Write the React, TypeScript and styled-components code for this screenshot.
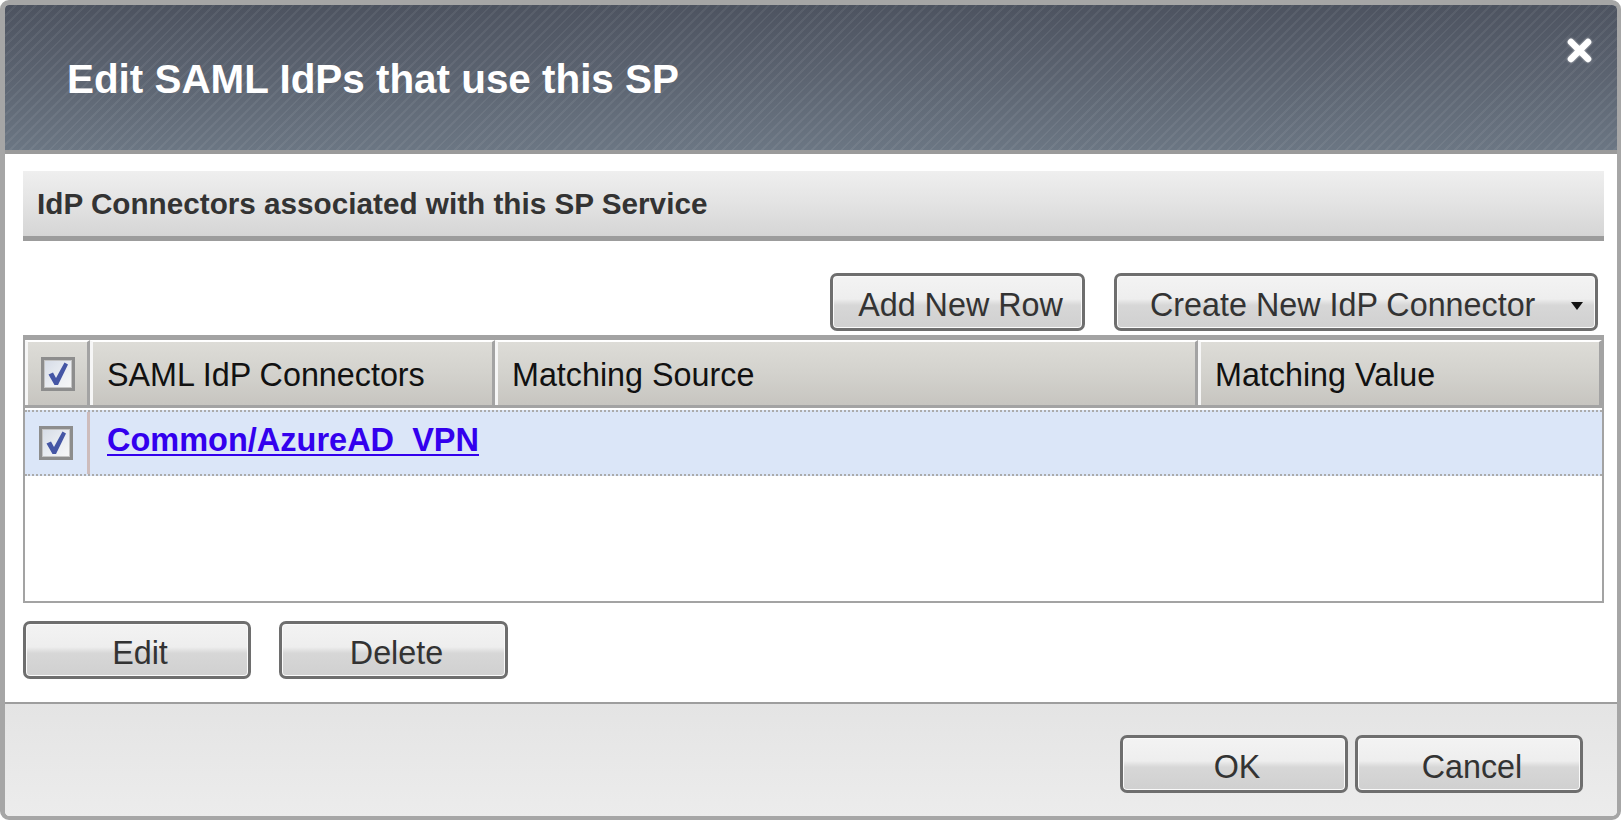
import styled, { createGlobalStyle } from "styled-components";

const GlobalStyle = createGlobalStyle`
  html, body {
    margin: 0;
    padding: 0;
    background: #ffffff;
    overflow: hidden;
  }
  * {
    box-sizing: border-box;
  }
  body {
    font-family: "Liberation Sans", Arial, sans-serif;
  }
`;

// column widths shared by the head row and the data rows
const COLUMNS = "65px 405px 703px 1fr";

const Dialog = styled.div`
  width: 1621px;
  height: 820px;
  display: flex;
  flex-direction: column;
  border: 4px solid #a6a6a6;
  border-top-width: 5px;
  border-left-width: 5px;
  border-radius: 9px;
  overflow: hidden;
  background: #ffffff;
`;

const Header = styled.div`
  height: 145px;
  flex-shrink: 0;
  display: flex;
  justify-content: space-between;
  align-items: center;
  padding: 0 25px 0 62px;
  border-bottom: 4px solid #9a9a9a;
  background:
    repeating-linear-gradient(
      135deg,
      rgba(255, 255, 255, 0.06) 0px,
      rgba(255, 255, 255, 0.06) 2px,
      rgba(255, 255, 255, 0) 2px,
      rgba(255, 255, 255, 0) 7px
    ),
    linear-gradient(to bottom, #4d5360 0%, #5c6471 50%, #6b7683 100%);
  box-sizing: content-box;
`;

const Title = styled.h1`
  margin: 0;
  color: #ffffff;
  font-size: 40.4px;
  font-weight: 700;
  line-height: 1;
  margin-top: 4px;
`;

const CloseButton = styled.button`
  align-self: flex-start;
  margin-top: 33px;
  width: 25px;
  height: 25px;
  padding: 0;
  border: 0;
  background: transparent;
  cursor: pointer;
  filter: drop-shadow(0 0 1px rgba(255, 255, 255, 0.6));
`;

const Body = styled.div`
  flex: 1;
  display: flex;
  flex-direction: column;
  padding: 17px 13px 23px 18px;
`;

const SectionBar = styled.div`
  height: 70px;
  flex-shrink: 0;
  display: flex;
  align-items: center;
  padding: 0 14px 0 14px;
  border-bottom: 5px solid #9c9c9c;
  background: linear-gradient(to bottom, #efefef 0%, #e3e3e3 50%, #d5d5d5 100%);
  color: #333333;
  font-size: 29.7px;
  font-weight: 700;
`;

const Toolbar = styled.div`
  margin-top: 32px;
  display: flex;
  justify-content: flex-end;
  gap: 29px;
  padding-right: 6px;
`;

const Button = styled.button<{ $width: number }>`
  width: ${(p) => p.$width}px;
  height: 58px;
  display: flex;
  align-items: center;
  justify-content: center;
  padding: 6px 0 0 6px;
  border: 3px solid #6e6e6e;
  border-radius: 7px;
  background: linear-gradient(
    to bottom,
    #f3f3f3 0%,
    #eeeeee 44%,
    #d7d7d7 56%,
    #d0d0d0 100%
  );
  box-shadow: inset 0 0 0 1px #fafafa;
  color: #333333;
  font-family: "Liberation Sans", Arial, sans-serif;
  font-size: 32.3px;
  line-height: 1;
  cursor: pointer;
`;

const MenuButton = styled(Button)`
  justify-content: space-between;
  padding: 6px 12px 0 33px;
`;

const Caret = styled.span`
  width: 0;
  height: 0;
  border-left: 6px solid transparent;
  border-right: 6px solid transparent;
  border-top: 8px solid #111111;
  margin-top: 2px;
`;

const Table = styled.div`
  margin-top: 4px;
  height: 268px;
  border: 2px solid #a3a3a3;
  border-top-width: 5px;
  display: flex;
  flex-direction: column;
`;

const HeadRow = styled.div`
  display: grid;
  grid-template-columns: ${COLUMNS};
  border-bottom: 3px solid #a3a3a3;
`;

const HeadCell = styled.div<{ $center?: boolean }>`
  height: 65px;
  display: flex;
  align-items: center;
  justify-content: ${(p) => (p.$center ? "center" : "flex-start")};
  padding: ${(p) => (p.$center ? "0" : "4px 0 0 14px")};
  border-top: 2px solid #ffffff;
  border-left: 3px solid #f6f6f6;
  border-right: 3px solid #a3a3a3;
  background: linear-gradient(to bottom, #dddcd7 0%, #d3d2cd 50%, #c7c5c0 100%);
  color: #111111;
  font-size: 32.3px;
`;

const DataRow = styled.div`
  margin-top: 2px;
  display: grid;
  grid-template-columns: ${COLUMNS};
  height: 66px;
  background: #dbe6f8;
  border-top: 2px dotted #ababab;
  border-bottom: 2px dotted #ababab;
`;

const DataCell = styled.div<{ $center?: boolean; $divider?: boolean }>`
  display: flex;
  align-items: center;
  justify-content: ${(p) => (p.$center ? "center" : "flex-start")};
  padding: ${(p) => (p.$center ? "0" : "0 0 5px 17px")};
  border-right: ${(p) => (p.$divider ? "3px solid #cdbcbc" : "0")};
`;

const Link = styled.a`
  color: #3300ee;
  font-size: 32.5px;
  font-weight: 700;
  text-decoration: underline;
  text-decoration-thickness: 2px;
  text-underline-offset: 3px;
  cursor: pointer;
`;

const Box = styled.span`
  width: 34px;
  height: 34px;
  display: flex;
  align-items: center;
  justify-content: center;
  border: 3px solid #8d8d8d;
  background: linear-gradient(135deg, #d5dbe6 0%, #eaedf2 55%, #f7f7f7 100%);
  box-shadow: inset 0 0 0 1px #c4c4c4;
`;

const Actions = styled.div`
  margin-top: 18px;
  display: flex;
  gap: 28px;
`;

const Footer = styled.div`
  flex-shrink: 0;
  display: flex;
  justify-content: flex-end;
  gap: 7px;
  padding: 31px 34px 23px 0;
  border-top: 2px solid #9e9e9e;
  background: linear-gradient(to bottom, #e4e4e4 0%, #ececec 100%);
`;

function CheckBox() {
  return (
    <Box>
      <svg width="24" height="26" viewBox="0 0 24 26">
        <path
          d="M2.5 13.5 L7 11.5 L10 17 L18.5 1.5 L22 3.5 L12 24 L8.5 24 Z"
          fill="#4556a5"
        />
      </svg>
    </Box>
  );
}

function App() {
  return (
    <>
      <GlobalStyle />
      <Dialog>
        <Header>
          <Title>Edit SAML IdPs that use this SP</Title>
          <CloseButton aria-label="Close">
            <svg width="25" height="25" viewBox="0 0 25 25">
              <path
                d="M4 4 L21 21 M21 4 L4 21"
                stroke="#ffffff"
                strokeWidth="6.5"
                strokeLinecap="round"
              />
            </svg>
          </CloseButton>
        </Header>

        <Body>
          <SectionBar>IdP Connectors associated with this SP Service</SectionBar>

          <Toolbar>
            <Button $width={255}>Add New Row</Button>
            <MenuButton $width={484}>
              Create New IdP Connector
              <Caret />
            </MenuButton>
          </Toolbar>

          <Table>
            <HeadRow>
              <HeadCell $center>
                <CheckBox />
              </HeadCell>
              <HeadCell>SAML IdP Connectors</HeadCell>
              <HeadCell>Matching Source</HeadCell>
              <HeadCell>Matching Value</HeadCell>
            </HeadRow>
            <DataRow>
              <DataCell $center $divider>
                <CheckBox />
              </DataCell>
              <DataCell>
                <Link>Common/AzureAD_VPN</Link>
              </DataCell>
              <DataCell />
              <DataCell />
            </DataRow>
          </Table>

          <Actions>
            <Button $width={228}>Edit</Button>
            <Button $width={229}>Delete</Button>
          </Actions>
        </Body>

        <Footer>
          <Button $width={228}>OK</Button>
          <Button $width={228}>Cancel</Button>
        </Footer>
      </Dialog>
    </>
  );
}

export default App;
